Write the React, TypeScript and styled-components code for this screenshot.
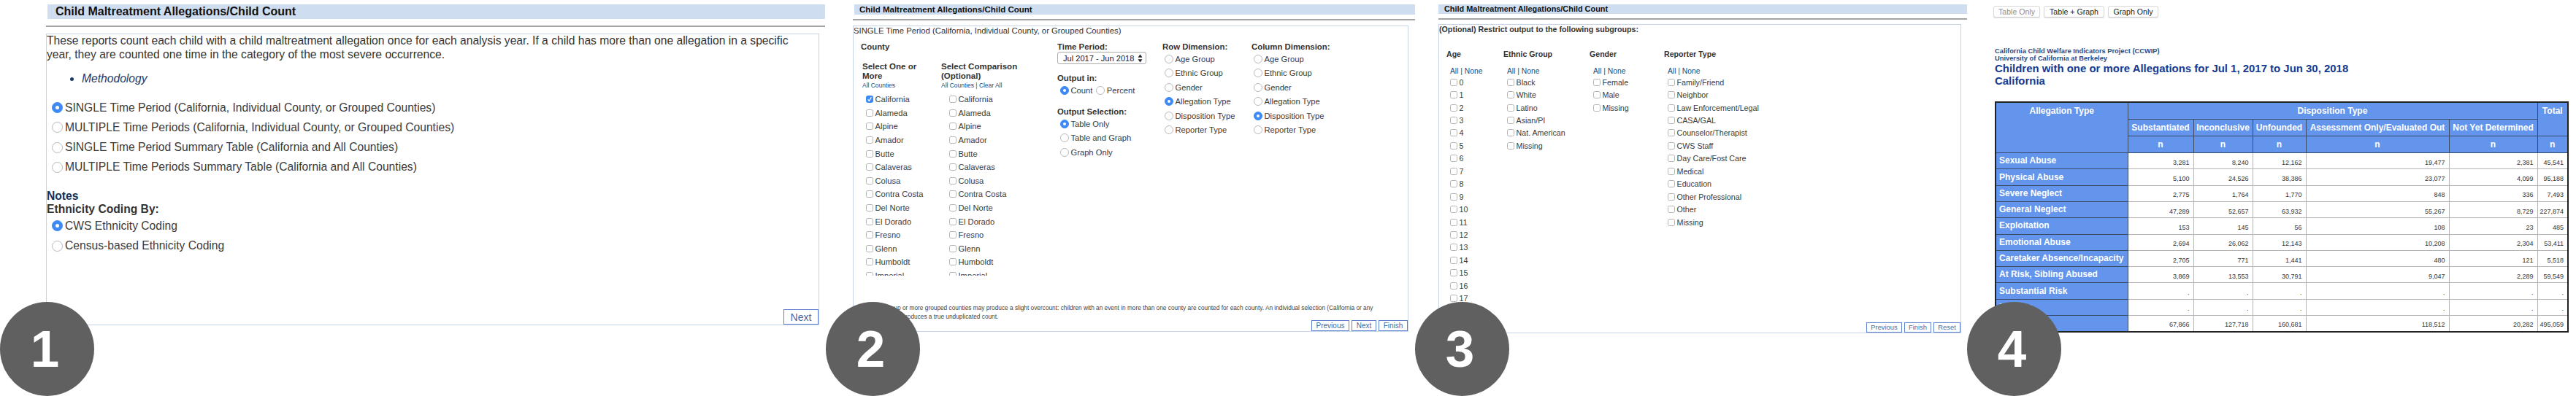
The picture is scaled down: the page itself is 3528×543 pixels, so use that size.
import React from "react";
import styled, { createGlobalStyle } from "styled-components";

const Global = createGlobalStyle`
  html, body { margin: 0; padding: 0; background: #fff; }
  body { font-family: "Liberation Sans", Arial, sans-serif; color: #333; }
`;

const Page = styled.div`
  position: relative;
  width: 3528px;
  height: 543px;
  overflow: hidden;
  display: flex;
  align-items: flex-start;
`;

const Section = styled.section<{ $w: number; $pl: number; $pr: number }>`
  flex: none;
  width: ${(p) => p.$w}px;
  padding-left: ${(p) => p.$pl}px;
  padding-right: ${(p) => p.$pr}px;
  box-sizing: border-box;
`;

const TitleBar = styled.div<{ $h: number; $size: number; $pad: number; $ml: number }>`
  margin: 6px 0 0 ${(p) => p.$ml}px;
  height: ${(p) => p.$h}px;
  line-height: ${(p) => p.$h}px;
  padding-left: ${(p) => p.$pad}px;
  background: #cfddf0;
  font-size: ${(p) => p.$size}px;
  font-weight: 700;
  color: #111;
  white-space: nowrap;
`;

const Rule = styled.div<{ $gap: number }>`
  height: 2px;
  margin-top: ${(p) => p.$gap}px;
  background: #a3a3a3;
`;

const Box = styled.div<{ $gap: number; $h: number; $mr: number }>`
  margin-top: ${(p) => p.$gap}px;
  margin-right: ${(p) => p.$mr}px;
  height: ${(p) => p.$h}px;
  box-sizing: border-box;
  border: 1px solid #c6d4e8;
  display: flex;
  flex-direction: column;
  overflow: hidden;
`;

const Intro = styled.p`
  margin: 0;
  font-size: 15.65px;
  line-height: 18.5px;
  color: #333;
  white-space: nowrap;
`;

const Method = styled.ul`
  margin: 15px 0 0;
  padding-left: 48px;
  font-size: 15.65px;
  font-style: italic;
  line-height: 18px;
  color: #1f3a66;
`;

const RadioStack = styled.div<{ $mt: number; $gap: number }>`
  margin-top: ${(p) => p.$mt}px;
  display: flex;
  flex-direction: column;
  gap: ${(p) => p.$gap}px;
`;

const OptionRow = styled.label<{ $size: number; $ml?: number; $h?: number }>`
  display: flex;
  align-items: center;
  margin-left: ${(p) => p.$ml ?? 0}px;
  height: ${(p) => p.$h ?? 18}px;
  font-size: ${(p) => p.$size}px;
  color: #3a3a3a;
  white-space: nowrap;
`;

const Radio = styled.span<{ $on?: boolean; $d: number }>`
  flex: none;
  box-sizing: border-box;
  width: ${(p) => p.$d}px;
  height: ${(p) => p.$d}px;
  margin-right: ${(p) => (p.$d > 13 ? 3 : 2.5)}px;
  border-radius: 50%;
  display: flex;
  align-items: center;
  justify-content: center;
  background: ${(p) => (p.$on ? "#3d8af7" : "#fff")};
  border: 1px solid ${(p) => (p.$on ? "#3d8af7" : "#b9b9b9")};
  &::after {
    content: "";
    display: ${(p) => (p.$on ? "block" : "none")};
    width: ${(p) => (p.$d > 13 ? 5 : 4)}px;
    height: ${(p) => (p.$d > 13 ? 5 : 4)}px;
    border-radius: 50%;
    background: #fff;
  }
`;

const Check = styled.span<{ $on?: boolean }>`
  flex: none;
  box-sizing: border-box;
  width: 10px;
  height: 10px;
  margin-right: 2.5px;
  border-radius: 2.5px;
  display: flex;
  align-items: center;
  justify-content: center;
  background: ${(p) => (p.$on ? "#3d8af7" : "#fff")};
  border: 1px solid ${(p) => (p.$on ? "#3d8af7" : "#b4b4b4")};
`;

const Notes = styled.div`
  margin-top: 21.5px;
  font-size: 15.65px;
  line-height: 18px;
  font-weight: 700;
  color: #123058;
`;

const NotesSub = styled.div`
  font-size: 15.65px;
  line-height: 18px;
  font-weight: 700;
  color: #333;
`;

const Actions = styled.div<{ $gap: number; $flush?: boolean }>`
  margin-top: ${(p) => (p.$flush ? "0" : "auto")};
  display: flex;
  justify-content: flex-end;
  gap: ${(p) => p.$gap}px;
`;

const ActionButton = styled.button<{ $w: number; $h: number; $size: number }>`
  flex: none;
  width: ${(p) => p.$w}px;
  height: ${(p) => p.$h}px;
  padding: 0;
  background: #fff;
  border: 1px solid #5d80cf;
  font-family: inherit;
  font-size: ${(p) => p.$size}px;
  color: #4a689e;
`;

const Lead = styled.div`
  font-size: 11.3px;
  line-height: 12px;
  color: #333;
`;

const FormColumns = styled.div`
  display: flex;
  align-items: flex-start;
  margin-top: 9px;
  padding-left: 10px;
`;

const CountyGroup = styled.div`
  flex: none;
  width: 269px;
`;

const GroupTitle = styled.div<{ $size?: number; $mt?: number }>`
  margin-top: ${(p) => p.$mt ?? 0}px;
  font-size: ${(p) => p.$size ?? 11.4}px;
  line-height: 14px;
  font-weight: 700;
  color: #333;
  white-space: nowrap;
`;

const CountyCols = styled.div`
  display: flex;
  margin-top: 14px;
  padding-left: 2px;
`;

const CountyCol = styled.div`
  flex: none;
  width: 108px;
`;

const ColHead = styled.div`
  height: 26px;
  font-size: 11.5px;
  line-height: 13px;
  font-weight: 700;
  color: #333;
  white-space: nowrap;
`;

const TinyLinks = styled.div`
  font-size: 8.45px;
  line-height: 12px;
  color: #214a7d;
  white-space: nowrap;
`;

const ClipList = styled.div`
  margin-top: 4px;
  margin-left: 5px;
  height: 251px;
  overflow: hidden;
`;

const CheckList = styled.div<{ $step: number; $size: number; $ml?: number }>`
  display: grid;
  grid-auto-rows: ${(p) => p.$step}px;
  margin-left: ${(p) => p.$ml ?? 0}px;
  font-size: ${(p) => p.$size}px;
`;

const MidCol = styled.div`
  flex: none;
  width: 144px;
`;

const SelectBox = styled.div`
  box-sizing: border-box;
  width: 122px;
  height: 17px;
  padding: 0 4px 0 7px;
  display: flex;
  align-items: center;
  justify-content: space-between;
  border: 1px solid #aaa;
  border-radius: 3px;
  font-size: 11.1px;
  color: #222;
  white-space: nowrap;
`;

const DimCol = styled.div<{ $w: number }>`
  flex: none;
  width: ${(p) => p.$w}px;
`;

const InlineRadios = styled.div`
  display: flex;
  margin-left: 4px;
  margin-top: 1px;
  gap: 5px;
`;

const Foot = styled.p`
  margin: auto 0 -1px;
  font-size: 8.3px;
  line-height: 12px;
  color: #444;
  white-space: nowrap;
`;

const SubHead = styled.div`
  font-size: 10.7px;
  line-height: 12px;
  font-weight: 700;
  color: #333;
`;

const SubCols = styled.div`
  display: flex;
  margin-top: 21px;
  padding-left: 10px;
`;

const SubCol = styled.div<{ $w: number }>`
  flex: none;
  width: ${(p) => p.$w}px;
`;

const AllNone = styled.div`
  margin: 10px 0 0 5px;
  height: 13px;
  font-size: 10.3px;
  line-height: 14px;
  color: #244a7c;
  white-space: nowrap;
`;

const ViewTabs = styled.div`
  margin-top: 8px;
  margin-left: -2px;
  display: flex;
  gap: 5px;
`;

const ViewTab = styled.button<{ $dim?: boolean; $w: number }>`
  width: ${(p) => p.$w}px;
  height: 16px;
  padding: 0;
  background: #fff;
  border: 1px solid #d8d8d8;
  border-radius: 3px;
  box-shadow: 0 1px 1px #ddd;
  font-family: inherit;
  font-size: 10.6px;
  color: ${(p) => (p.$dim ? "#8f8f8f" : "#222")};
`;

const Org = styled.div`
  margin-top: 40.7px;
  font-size: 9.3px;
  line-height: 10.7px;
  font-weight: 700;
  color: #2a4a86;
  white-space: nowrap;
`;

const ReportTitle = styled.h1`
  margin: -1.5px 0 0;
  font-size: 14.95px;
  line-height: 17px;
  font-weight: 700;
  color: #143a92;
  white-space: nowrap;
`;

const Table = styled.table`
  margin-top: 20.5px;
  width: 786px;
  table-layout: fixed;
  border-collapse: collapse;
  border: 2px solid #222;
  font-size: 9px;
`;

const Th = styled.th<{ $tall?: boolean }>`
  box-sizing: border-box;
  background: #6495ed;
  color: #fff;
  font-size: 12px;
  font-weight: 700;
  height: 22.3px;
  padding: 0;
  border: 1px solid #3a4a66;
  vertical-align: ${(p) => (p.$tall ? "top" : "middle")};
  white-space: nowrap;
  overflow: hidden;
  line-height: 22px;
`;

const RowHead = styled.th`
  box-sizing: border-box;
  background: #6495ed;
  color: #fff;
  text-align: left;
  font-size: 12px;
  font-weight: 700;
  height: 22.3px;
  padding: 0 0 1px 4px;
  border: 1px solid #3a4a66;
  white-space: nowrap;
  overflow: hidden;
`;

const Td = styled.td`
  box-sizing: border-box;
  text-align: right;
  padding: 4px 5px 0 0;
  height: 22.3px;
  border: 1px solid #b4b4b4;
  color: #333;
`;

const Badge = styled.div<{ $x: number }>`
  position: absolute;
  left: ${(p) => p.$x}px;
  top: 414px;
  width: 129px;
  height: 129px;
  box-sizing: border-box;
  padding-right: 6px;
  border-radius: 50%;
  background: #606060;
  color: #fff;
  font-size: 71px;
  font-weight: 700;
  display: flex;
  align-items: center;
  justify-content: center;
`;

const CheckMark = () => (
  <svg width="8" height="8" viewBox="0 0 10 10" aria-hidden="true">
    <path d="M2 5.4 L4.2 8 L8 1.8" fill="none" stroke="#fff" strokeWidth="1.6" />
  </svg>
);

const SelectArrows = () => (
  <svg width="7" height="12" viewBox="0 0 7 12" aria-hidden="true">
    <path d="M3.5 0.5 L6.5 4.8 L0.5 4.8 Z M3.5 11.5 L6.5 7.2 L0.5 7.2 Z" fill="#222" />
  </svg>
);

const RadioOpt = ({ text, on, size, d, h, ml }: { text: string; on?: boolean; size: number; d: number; h?: number; ml?: number }) => (
  <OptionRow $size={size} $h={h} $ml={ml}>
    <Radio $on={on} $d={d} />
    {text}
  </OptionRow>
);

const CheckOpt = ({ text, on, size, h }: { text: string; on?: boolean; size: number; h: number }) => (
  <OptionRow $size={size} $h={h}>
    <Check $on={on}>{on && <CheckMark />}</Check>
    {text}
  </OptionRow>
);

const counties = ["California", "Alameda", "Alpine", "Amador", "Butte", "Calaveras", "Colusa", "Contra Costa", "Del Norte", "El Dorado", "Fresno", "Glenn", "Humboldt", "Imperial"];
const dims = ["Age Group", "Ethnic Group", "Gender", "Allegation Type", "Disposition Type", "Reporter Type"];

const subgroups = [
  { title: "Age", w: 78, items: Array.from({ length: 18 }, (_, i) => String(i)) },
  { title: "Ethnic Group", w: 118, items: ["Black", "White", "Latino", "Asian/PI", "Nat. American", "Missing"] },
  { title: "Gender", w: 102, items: ["Female", "Male", "Missing"] },
  {
    title: "Reporter Type",
    w: 200,
    items: ["Family/Friend", "Neighbor", "Law Enforcement/Legal", "CASA/GAL", "Counselor/Therapist", "CWS Staff", "Day Care/Fost Care", "Medical", "Education", "Other Professional", "Other", "Missing"],
  },
];

const rows: [string, string[]][] = [
  ["Sexual Abuse", ["3,281", "8,240", "12,162", "19,477", "2,381", "45,541"]],
  ["Physical Abuse", ["5,100", "24,526", "38,386", "23,077", "4,099", "95,188"]],
  ["Severe Neglect", ["2,775", "1,764", "1,770", "848", "336", "7,493"]],
  ["General Neglect", ["47,289", "52,657", "63,932", "55,267", "8,729", "227,874"]],
  ["Exploitation", ["153", "145", "56", "108", "23", "485"]],
  ["Emotional Abuse", ["2,694", "26,062", "12,143", "10,208", "2,304", "53,411"]],
  ["Caretaker Absence/Incapacity", ["2,705", "771", "1,441", "480", "121", "5,518"]],
  ["At Risk, Sibling Abused", ["3,869", "13,553", "30,791", "9,047", "2,289", "59,549"]],
  ["Substantial Risk", [".", ".", ".", ".", ".", "."]],
  ["Missing", [".", ".", ".", ".", ".", "."]],
  ["Total", ["67,866", "127,718", "160,681", "118,512", "20,282", "495,059"]],
];

const colWidths = [181, 90, 81, 73, 196, 121, 42];

export default function App() {
  return (
    <Page>
      <Global />

      <Section $w={1131} $pl={63} $pr={1}>
        <TitleBar $h={20} $size={16} $pad={11} $ml={2}>Child Maltreatment Allegations/Child Count</TitleBar>
        <Rule $gap={9} />
        <Box $gap={9} $h={400} $mr={8}>
          <Intro>
            These reports count each child with a child maltreatment allegation once for each analysis year. If a child has more than one allegation in a specific<br />
            year, they are counted one time in the category of the most severe occurrence.
          </Intro>
          <Method><li>Methodology</li></Method>
          <RadioStack $mt={21.5} $gap={9.3}>
            <RadioOpt on size={15.65} d={15} ml={7} text="SINGLE Time Period (California, Individual County, or Grouped Counties)" />
            <RadioOpt size={15.65} d={15} ml={7} text="MULTIPLE Time Periods (California, Individual County, or Grouped Counties)" />
            <RadioOpt size={15.65} d={15} ml={7} text="SINGLE Time Period Summary Table (California and All Counties)" />
            <RadioOpt size={15.65} d={15} ml={7} text="MULTIPLE Time Periods Summary Table (California and All Counties)" />
          </RadioStack>
          <Notes>Notes</Notes>
          <NotesSub>Ethnicity Coding By:</NotesSub>
          <RadioStack $mt={5} $gap={9.3}>
            <RadioOpt on size={15.65} d={15} ml={7} text="CWS Ethnicity Coding" />
            <RadioOpt size={15.65} d={15} ml={7} text="Census-based Ethnicity Coding" />
          </RadioStack>
          <Actions $gap={0}>
            <ActionButton $w={48} $h={21} $size={14}>Next</ActionButton>
          </Actions>
        </Box>
      </Section>

      <Section $w={807} $pl={37} $pr={0}>
        <TitleBar $h={14} $size={11.5} $pad={7} $ml={2}>Child Maltreatment Allegations/Child Count</TitleBar>
        <Rule $gap={6} />
        <Box $gap={7} $h={420} $mr={9}>
          <Lead>SINGLE Time Period (California, Individual County, or Grouped Counties)</Lead>
          <FormColumns>
            <CountyGroup>
              <GroupTitle>County</GroupTitle>
              <CountyCols>
                <CountyCol>
                  <ColHead>Select One or<br />More</ColHead>
                  <TinyLinks>All Counties</TinyLinks>
                  <ClipList>
                    <CheckList $step={18.6} $size={11.2}>
                      {counties.map((c, i) => <CheckOpt key={c} text={c} on={i === 0} size={11.2} h={18.6} />)}
                    </CheckList>
                  </ClipList>
                </CountyCol>
                <CountyCol>
                  <ColHead>Select Comparison<br />(Optional)</ColHead>
                  <TinyLinks>All Counties | Clear All</TinyLinks>
                  <ClipList>
                    <CheckList $step={18.6} $size={11.2} $ml={6}>
                      {counties.map((c) => <CheckOpt key={c} text={c} size={11.2} h={18.6} />)}
                    </CheckList>
                  </ClipList>
                </CountyCol>
              </CountyCols>
            </CountyGroup>
            <MidCol>
              <GroupTitle>Time Period:</GroupTitle>
              <SelectBox>Jul 2017 - Jun 2018<SelectArrows /></SelectBox>
              <GroupTitle $mt={12}>Output in:</GroupTitle>
              <InlineRadios>
                <RadioOpt on size={11.2} d={12} text="Count" />
                <RadioOpt size={11.2} d={12} text="Percent" />
              </InlineRadios>
              <GroupTitle $mt={13}>Output Selection:</GroupTitle>
              <RadioStack $mt={1} $gap={1.4}>
                <RadioOpt on size={11.2} d={12} ml={4} text="Table Only" />
                <RadioOpt size={11.2} d={12} ml={4} text="Table and Graph" />
                <RadioOpt size={11.2} d={12} ml={4} text="Graph Only" />
              </RadioStack>
            </MidCol>
            <DimCol $w={122}>
              <GroupTitle>Row Dimension:</GroupTitle>
              <RadioStack $mt={1} $gap={1.4}>
                {dims.map((d) => <RadioOpt key={d} on={d === "Allegation Type"} size={11.2} d={12} ml={3} text={d} />)}
              </RadioStack>
            </DimCol>
            <DimCol $w={150}>
              <GroupTitle>Column Dimension:</GroupTitle>
              <RadioStack $mt={1} $gap={1.4}>
                {dims.map((d) => <RadioOpt key={d} on={d === "Disposition Type"} size={11.2} d={12} ml={3} text={d} />)}
              </RadioStack>
            </DimCol>
          </FormColumns>
          <Foot>
            Selecting a group or more grouped counties may produce a slight overcount: children with an event in more than one county are counted for each county. An individual selection (California or any<br />
            individual county) produces a true unduplicated count.
          </Foot>
          <Actions $gap={3} $flush>
            <ActionButton $w={52} $h={15} $size={10}>Previous</ActionButton>
            <ActionButton $w={34} $h={15} $size={10}>Next</ActionButton>
            <ActionButton $w={40} $h={15} $size={10}>Finish</ActionButton>
          </Actions>
        </Box>
      </Section>

      <Section $w={756} $pl={32} $pr={0}>
        <TitleBar $h={13} $size={10.9} $pad={8} $ml={0}>Child Maltreatment Allegations/Child Count</TitleBar>
        <Rule $gap={6} />
        <Box $gap={6} $h={424} $mr={8}>
          <SubHead>(Optional) Restrict output to the following subgroups:</SubHead>
          <SubCols>
            {subgroups.map((g) => (
              <SubCol key={g.title} $w={g.w}>
                <GroupTitle $size={10.6}>{g.title}</GroupTitle>
                <AllNone>All | None</AllNone>
                <CheckList $step={17.45} $size={10.7} $ml={5}>
                  {g.items.map((t) => <CheckOpt key={t} text={t} size={10.7} h={17.45} />)}
                </CheckList>
              </SubCol>
            ))}
          </SubCols>
          <Actions $gap={3}>
            <ActionButton $w={49} $h={14.5} $size={9.4}>Previous</ActionButton>
            <ActionButton $w={37} $h={14.5} $size={9.4}>Finish</ActionButton>
            <ActionButton $w={37} $h={14.5} $size={9.4}>Reset</ActionButton>
          </Actions>
        </Box>
      </Section>

      <Section $w={834} $pl={38} $pr={10}>
        <ViewTabs>
          <ViewTab $dim $w={64}>Table Only</ViewTab>
          <ViewTab $w={83}>Table + Graph</ViewTab>
          <ViewTab $w={69}>Graph Only</ViewTab>
        </ViewTabs>
        <Org>California Child Welfare Indicators Project (CCWIP)<br />University of California at Berkeley</Org>
        <ReportTitle>Children with one or more Allegations for Jul 1, 2017 to Jun 30, 2018<br />California</ReportTitle>
        <Table>
          <colgroup>
            {colWidths.map((w, i) => <col key={i} width={w} />)}
          </colgroup>
          <thead>
            <tr>
              <Th $tall rowSpan={3}>Allegation Type</Th>
              <Th colSpan={5}>Disposition Type</Th>
              <Th $tall rowSpan={2}>Total</Th>
            </tr>
            <tr>
              <Th>Substantiated</Th>
              <Th>Inconclusive</Th>
              <Th>Unfounded</Th>
              <Th>Assessment Only/Evaluated Out</Th>
              <Th>Not Yet Determined</Th>
            </tr>
            <tr>
              {[0, 1, 2, 3, 4, 5].map((i) => <Th key={i}>n</Th>)}
            </tr>
          </thead>
          <tbody>
            {rows.map(([name, vals]) => (
              <tr key={name}>
                <RowHead>{name}</RowHead>
                {vals.map((v, i) => <Td key={i}>{v}</Td>)}
              </tr>
            ))}
          </tbody>
        </Table>
      </Section>

      <Badge $x={0}>1</Badge>
      <Badge $x={1131}>2</Badge>
      <Badge $x={1938}>3</Badge>
      <Badge $x={2694}>4</Badge>
    </Page>
  );
}
